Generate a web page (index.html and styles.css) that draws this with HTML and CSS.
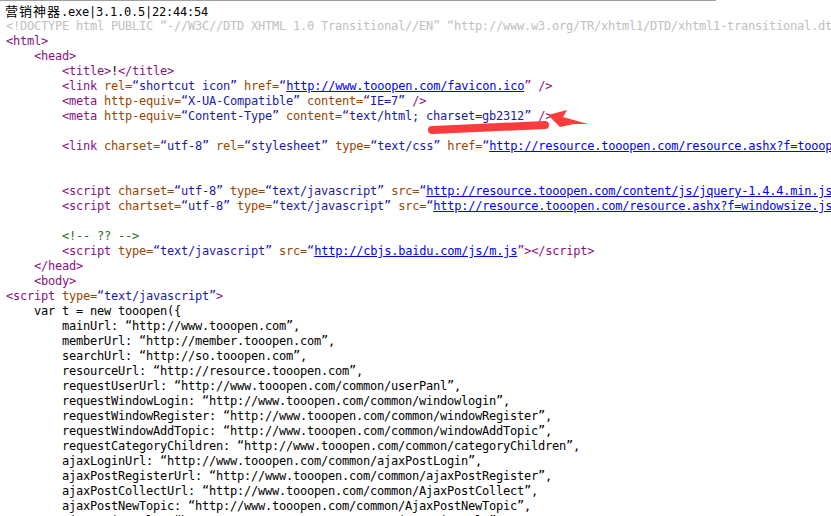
FILE: index.html
```html
<!DOCTYPE html>
<html lang="zh-CN">
<head>
    <meta charset="UTF-8">
    <meta name="viewport" content="width=device-width, initial-scale=1.0">
    <title>营销神器 - 源文件</title>
    <link rel="stylesheet" href="styles.css">
</head>
<body>
    <div class="topline"></div>
    <div class="caption"><span class="cjk">营销神器</span>.exe|3.1.0.5|22:44:54</div>
<pre class="source"><span class="doc">&lt;!DOCTYPE html PUBLIC “-//W3C//DTD XHTML 1.0 Transitional//EN” “http://www.w3.org/TR/xhtml1/DTD/xhtml1-transitional.dtd”&gt;</span>
<span class="tag">&lt;html&gt;</span>
    <span class="tag">&lt;head&gt;</span>
        <span class="tag">&lt;title&gt;</span>!<span class="tag">&lt;/title&gt;</span>
        <span class="tag">&lt;link</span> <span class="attr">rel=</span><span class="val">“shortcut icon”</span> <span class="attr">href=</span><span class="val">“</span><a class="url">http://www.tooopen.com/favicon.ico</a><span class="tag">” /&gt;</span>
        <span class="tag">&lt;meta</span> <span class="attr">http-equiv=</span><span class="val">“X-UA-Compatible”</span> <span class="attr">content=</span><span class="val">“IE=7”</span> <span class="tag">/&gt;</span>
        <span class="tag">&lt;meta</span> <span class="attr">http-equiv=</span><span class="val">“Content-Type”</span> <span class="attr">content=</span><span class="val">“text/html; charset=gb2312”</span> <span class="tag">/&gt;</span>

        <span class="tag">&lt;link</span> <span class="attr">charset=</span><span class="val">“utf-8”</span> <span class="attr">rel=</span><span class="val">“stylesheet”</span> <span class="attr">type=</span><span class="val">“text/css”</span> <span class="attr">href=</span><span class="val">“</span><a class="url">http://resource.tooopen.com/resource.ashx?f=tooopen.css,common.css</a><span class="tag">” /&gt;</span>


        <span class="tag">&lt;script</span> <span class="attr">charset=</span><span class="val">“utf-8”</span> <span class="attr">type=</span><span class="val">“text/javascript”</span> <span class="attr">src=</span><span class="val">“</span><a class="url">http://resource.tooopen.com/content/js/jquery-1.4.4.min.js</a><span class="tag">”&gt;&lt;/script&gt;</span>
        <span class="tag">&lt;script</span> <span class="attr">chartset=</span><span class="val">“utf-8”</span> <span class="attr">type=</span><span class="val">“text/javascript”</span> <span class="attr">src=</span><span class="val">“</span><a class="url">http://resource.tooopen.com/resource.ashx?f=windowsize.js,tooopen.js</a><span class="tag">”&gt;&lt;/script&gt;</span>

        <span class="cmt">&lt;!-- ?? --&gt;</span>
        <span class="tag">&lt;script</span> <span class="attr">type=</span><span class="val">“text/javascript”</span> <span class="attr">src=</span><span class="val">“</span><a class="url">http://cbjs.baidu.com/js/m.js</a><span class="tag">”&gt;&lt;/script&gt;</span>
    <span class="tag">&lt;/head&gt;</span>
    <span class="tag">&lt;body&gt;</span>
<span class="tag">&lt;script</span> <span class="attr">type=</span><span class="val">“text/javascript”</span><span class="tag">&gt;</span>
    var t = new tooopen({
        mainUrl: “http://www.tooopen.com”,
        memberUrl: “http://member.tooopen.com”,
        searchUrl: “http://so.tooopen.com”,
        resourceUrl: “http://resource.tooopen.com”,
        requestUserUrl: “http://www.tooopen.com/common/userPanl”,
        requestWindowLogin: “http://www.tooopen.com/common/windowlogin”,
        requestWindowRegister: “http://www.tooopen.com/common/windowRegister”,
        requestWindowAddTopic: “http://www.tooopen.com/common/windowAddTopic”,
        requestCategoryChildren: “http://www.tooopen.com/common/categoryChildren”,
        ajaxLoginUrl: “http://www.tooopen.com/common/ajaxPostLogin”,
        ajaxPostRegisterUrl: “http://www.tooopen.com/common/ajaxPostRegister”,
        ajaxPostCollectUrl: “http://www.tooopen.com/common/AjaxPostCollect”,
        ajaxPostNewTopic: “http://www.tooopen.com/common/AjaxPostNewTopic”,
        ajaxTopicReply: “http://www.tooopen.com/common/AjaxTopicReply”,
    });
<span class="tag">&lt;/script&gt;</span></pre>
    <svg class="mark" width="831" height="516" viewBox="0 0 831 516">
        <path d="M432 130 L545 125" stroke="#fa3c3c" stroke-width="8" stroke-linecap="round" fill="none"/>
        <path d="M548 115 L567 110 L563 117 L588 124 L574 124 L560 127 Z" fill="#fa3c3c"/>
    </svg>
</body>
</html>
```

FILE: styles.css
```css
/* tampilan sumber halaman */
body {
    margin: 0;
    background: #fff;
    height: 516px;
    overflow: hidden;
    position: relative;
}
.topline {
    width: 716px;
    height: 1px;
    background-color: #a0a0a0;
}
.caption,
.source {
    font-family: 'DejaVu Sans Mono', monospace;
    font-size: 12px;
    letter-spacing: -0.224px;
    line-height: 15px;
    color: #000;
    white-space: pre;
}
.caption {
    height: 15px;
    padding: 3px 0 0 5px;
}
.cjk {
    font-family: 'Noto Sans CJK SC', sans-serif;
    font-size: 13px;
    letter-spacing: 1px;
    line-height: 1;
}
.source {
    margin: 0;
    padding: 0 0 0 6px;
    overflow: hidden;
}
.doc {
    color: #c0c0c0;
}
.tag {
    color: #881280;
}
.attr {
    color: #994500;
}
.val {
    color: #1a1aa6;
}
.url {
    color: #0000ff;
    text-decoration: underline;
}
.cmt {
    color: #236e25;
}
.mark {
    position: absolute;
    top: 0;
    left: 0;
    pointer-events: none;
}
```
